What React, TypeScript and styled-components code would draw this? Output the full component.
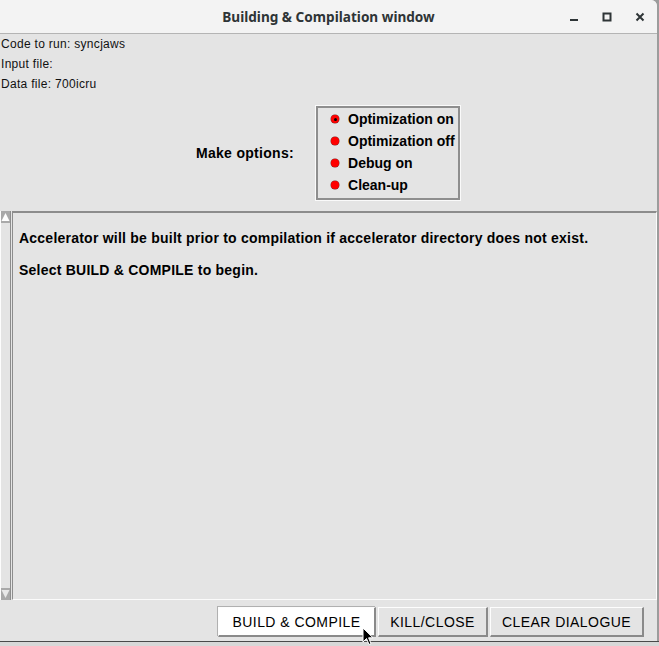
import React from "react";
import styled, { createGlobalStyle } from "styled-components";

const GlobalStyle = createGlobalStyle`
  html, body {
    margin: 0;
    padding: 0;
    background: #9c9c9c;
  }
  body {
    width: 659px;
    height: 646px;
    overflow: hidden;
  }
`;

const MAKE_OPTIONS = [
  { label: "Optimization on", on: true },
  { label: "Optimization off", on: false },
  { label: "Debug on", on: false },
  { label: "Clean-up", on: false },
];

const Screen = styled.div`
  position: relative;
  width: 659px;
  height: 646px;
  display: flex;
  flex-direction: column;
`;

const Window = styled.div`
  width: 657px;
  height: 641px;
  display: flex;
  flex-direction: column;
  background: #e4e4e4;
  border-top-right-radius: 6px;
  overflow: hidden;
`;

const Desktop = styled.div`
  flex: 1;
  background: #d8d8d8;
  border-top: 1px solid #4a4a4a;
`;

const TitleBar = styled.div`
  height: 33px;
  flex-shrink: 0;
  display: grid;
  grid-template-columns: 1fr auto 1fr;
  align-items: center;
  background: #f3f3f3;
  border-bottom: 1px solid #b4b4b4;
`;

const Title = styled.span`
  grid-column: 2;
  margin-top: -1px;
  font-family: "Noto Sans", "DejaVu Sans", sans-serif;
  font-weight: 700;
  font-size: 13.6px;
  color: #2e3436;
`;

const Controls = styled.div`
  grid-column: 3;
  justify-self: end;
  display: flex;
  padding-right: 1px;
`;

const ControlButton = styled.div`
  width: 33px;
  height: 33px;
  display: flex;
  align-items: center;
  justify-content: center;
  color: #2e3436;
`;

const Body = styled.div`
  flex: 1;
  display: flex;
  flex-direction: column;
  min-height: 0;
`;

const InfoBlock = styled.div`
  padding-left: 1px;
  font-family: "Liberation Sans", Arial, sans-serif;
  font-size: 12px;
  letter-spacing: 0.3px;
  color: #111;
`;

const InfoLine = styled.div`
  height: 20px;
  line-height: 20px;
`;

const OptionsRow = styled.div`
  margin-top: 11px;
  display: flex;
  align-items: center;
  justify-content: center;
  gap: 21px;
`;

const BoldLabel = styled.span<{ $tight?: boolean }>`
  font-family: "Liberation Sans", Arial, sans-serif;
  font-weight: 700;
  font-size: 14px;
  letter-spacing: ${({ $tight }) => ($tight ? "0px" : "0.3px")};
  white-space: nowrap;
  color: #000;
`;

const OptionsBox = styled.div`
  width: 144px;
  box-sizing: border-box;
  padding: 0 0 2px 0;
  border: 2px solid #8e8e8e;
  box-shadow: 0 0 0 1px #fafafa;
  margin: 1px;
`;

const OptionRow = styled.div`
  height: 22px;
  display: flex;
  align-items: center;
  gap: 9px;
  padding-left: 13px;
`;

const Dot = styled.span<{ $on: boolean }>`
  position: relative;
  flex-shrink: 0;
  width: 8px;
  height: 8px;
  border-radius: 50%;
  background: #ff0000;
  box-shadow: 0 0 0 0.5px #7a2a2a;
  &::after {
    content: "";
    display: ${({ $on }) => ($on ? "block" : "none")};
    position: absolute;
    left: 2.5px;
    top: 2.5px;
    width: 3px;
    height: 3px;
    border-radius: 50%;
    background: #000;
  }
`;

const Panel = styled.div`
  margin-top: 10px;
  flex: 1;
  display: flex;
  min-height: 0;
`;

const Scrollbar = styled.div`
  width: 9px;
  display: flex;
  flex-direction: column;
  justify-content: space-between;
  border-left: 1px solid #fdfdfd;
  border-right: 1px solid #8c8c8c;
  background: #e4e4e4;
`;

const Arrow = styled.div`
  height: 12px;
  display: flex;
  align-items: center;
  justify-content: center;
  background: #a9a9a9;
`;

const TextArea = styled.div`
  flex: 1;
  margin-left: 1px;
  padding: 17px 0 0 6px;
  border-top: 2px solid #8c8c8c;
  border-left: 1px solid #8c8c8c;
  border-right: 1px solid #fbfbfb;
  border-bottom: 1px solid #fbfbfb;
  font-family: "Liberation Sans", Arial, sans-serif;
  font-weight: 700;
  font-size: 14px;
  letter-spacing: 0.23px;
  line-height: 16px;
  color: #000;
`;

const Para = styled.p`
  margin: 0 0 16px 0;
`;

const ButtonBar = styled.div`
  height: 41px;
  flex-shrink: 0;
  display: flex;
  justify-content: flex-end;
  align-items: flex-start;
  gap: 2px;
  padding: 7px 13px 0 0;
  box-sizing: border-box;
`;

const Button = styled.button<{ $default?: boolean; $w: number }>`
  width: ${({ $w }) => $w}px;
  height: 30px;
  box-sizing: border-box;
  font-family: "Liberation Sans", Arial, sans-serif;
  font-size: 14px;
  letter-spacing: 0.45px;
  color: #000;
  background: ${({ $default }) => ($default ? "#ffffff" : "#e4e4e4")};
  border-style: solid;
  border-width: 1px 2px 2px 1px;
  border-color: #fdfdfd #8a8a8a #8a8a8a #fdfdfd;
  box-shadow: ${({ $default }) =>
    $default ? "inset 0 0 0 1px #ffffff, -1px -1px 0 0 #b0b0b0" : "none"};
  padding: 0;
  cursor: default;
`;

const Cursor = styled.svg`
  position: absolute;
  left: 362px;
  top: 627px;
`;

export default function App() {
  return (
    <Screen>
      <GlobalStyle />
      <Window>
        <TitleBar>
          <Title>Building &amp; Compilation window</Title>
          <Controls>
            <ControlButton>
              <svg width="10" height="10" viewBox="0 0 10 10">
                <rect x="1" y="7" width="8" height="2" fill="currentColor" />
              </svg>
            </ControlButton>
            <ControlButton>
              <svg width="10" height="10" viewBox="0 0 10 10">
                <rect x="1.5" y="1.5" width="7" height="7" fill="none" stroke="currentColor" strokeWidth="2" />
              </svg>
            </ControlButton>
            <ControlButton>
              <svg width="10" height="10" viewBox="0 0 10 10">
                <path d="M1.5 1.5 L8.5 8.5 M8.5 1.5 L1.5 8.5" stroke="currentColor" strokeWidth="2" />
              </svg>
            </ControlButton>
          </Controls>
        </TitleBar>
        <Body>
          <InfoBlock>
            <InfoLine>Code to run: syncjaws</InfoLine>
            <InfoLine>Input file:</InfoLine>
            <InfoLine>Data file: 700icru</InfoLine>
          </InfoBlock>
          <OptionsRow>
            <BoldLabel>Make options:</BoldLabel>
            <OptionsBox>
              {MAKE_OPTIONS.map((opt) => (
                <OptionRow key={opt.label}>
                  <Dot $on={opt.on} />
                  <BoldLabel $tight>{opt.label}</BoldLabel>
                </OptionRow>
              ))}
            </OptionsBox>
          </OptionsRow>
          <Panel>
            <Scrollbar>
              <Arrow>
                <svg width="9" height="10" viewBox="0 0 9 10">
                  <path d="M4.5 1 L8.5 9 L0.5 9 Z" fill="#ffffff" />
                </svg>
              </Arrow>
              <Arrow>
                <svg width="9" height="10" viewBox="0 0 9 10">
                  <path d="M0.5 1 L8.5 1 L4.5 9 Z" fill="#e8e8e8" />
                </svg>
              </Arrow>
            </Scrollbar>
            <TextArea>
              <Para>
                Accelerator will be built prior to compilation if accelerator directory does not exist.
              </Para>
              <Para>Select BUILD &amp; COMPILE to begin.</Para>
            </TextArea>
          </Panel>
          <ButtonBar>
            <Button $default $w={158}>BUILD &amp; COMPILE</Button>
            <Button $w={110}>KILL/CLOSE</Button>
            <Button $w={154}>CLEAR DIALOGUE</Button>
          </ButtonBar>
        </Body>
      </Window>
      <Desktop />
      <Cursor width="12" height="19" viewBox="0 0 12 19">
        <path d="M1 1 L1 15 L4.5 11.5 L7 17.5 L9 16.6 L6.6 10.8 L11 10.8 Z" fill="#000" stroke="#fff" strokeWidth="1" />
      </Cursor>
    </Screen>
  );
}
